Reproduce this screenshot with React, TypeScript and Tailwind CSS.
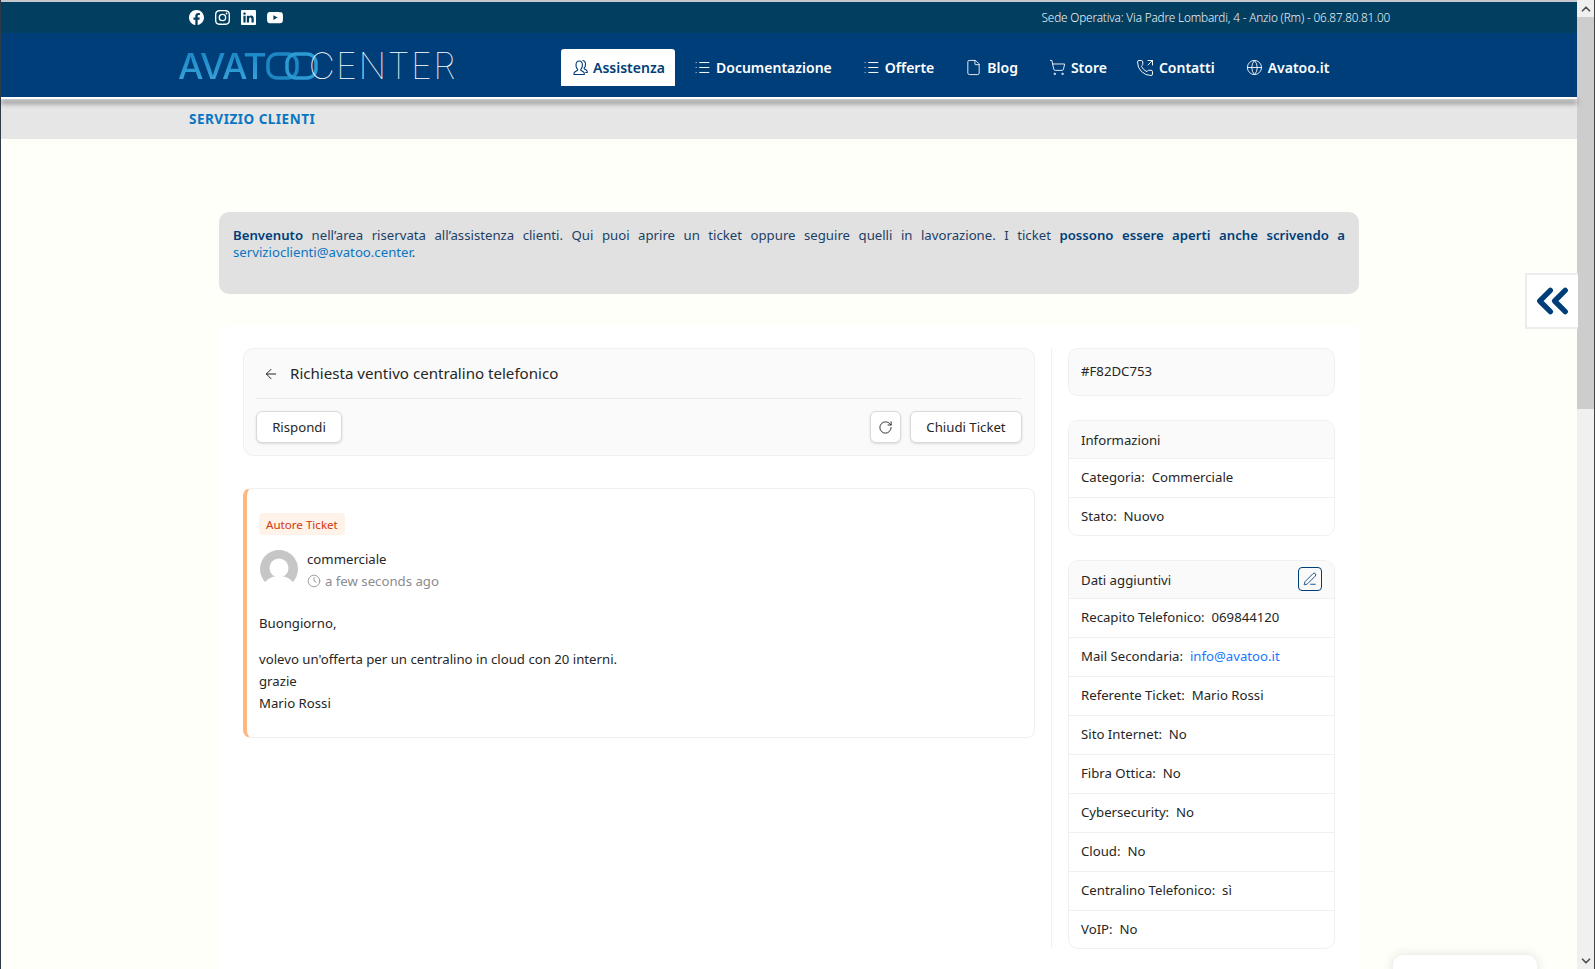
import { BsFacebook, BsInstagram, BsLinkedin, BsYoutube } from "react-icons/bs";
import { ArrowLeft, RotateCw, Clock, List, File, ShoppingCart, PhoneOutgoing, Globe, PenLine, ChevronsLeft, ChevronUp, ChevronDown } from "lucide-react";

function PeopleIcon() {
  return (
    <svg width="17" height="17" viewBox="0 0 17 17" fill="none" stroke="#003e79" strokeWidth="1.1">
      <path d="M2 15.5v-1.2c0-1.6 2.6-2.2 3.6-3v-1C4.6 9.400 4 8 4 6.200 4 3.500 5.200 2 7.200 2s3.200 1.500 3.200 4.200c0 1.800-.6 3.200-1.600 4.100v1c1 .8 3.500 1.400 3.500 3v1.200z" />
      <path d="M10.500 1.500c2 .1 3 1.600 3 3.900 0 1.500-.5 2.700-1.300 3.400v.9c.9.6 3 1.200 3 2.600v1.200h-2" />
    </svg>
  );
}

const navItems = [
  { label: "Documentazione", icon: <List size={17} strokeWidth={1.4} />, cls: "ml-[19px]" },
  { label: "Offerte", icon: <List size={17} strokeWidth={1.4} />, cls: "ml-[31px]" },
  { label: "Blog", icon: <File size={17} strokeWidth={1.25} />, cls: "ml-[31px]" },
  { label: "Store", icon: <ShoppingCart size={17} strokeWidth={1.25} />, cls: "ml-[31px]" },
  { label: "Contatti", icon: <PhoneOutgoing size={18} strokeWidth={1.25} />, cls: "ml-[29px]" },
  { label: "Avatoo.it", icon: <Globe size={17} strokeWidth={1.25} />, cls: "ml-[31px]" },
];

const extras: [string, string][] = [
  ["Referente Ticket:", "Mario Rossi"],
  ["Sito Internet:", "No"],
  ["Fibra Ottica:", "No"],
  ["Cybersecurity:", "No"],
  ["Cloud:", "No"],
  ["Centralino Telefonico:", "sì"],
];

function Row({ k, children, short }: { k: string; children: React.ReactNode; short?: boolean }) {
  return (
    <div className={`${short ? "h-[38px]" : "h-[39px]"} flex items-center pl-3 border-t border-[#f0f0f0] whitespace-pre`}>
      <span>{k}  </span>
      {children}
    </div>
  );
}

function Logo() {
  return (
    <div className="flex items-center h-[32px] leading-none ml-[177px] mt-[1px] w-[277px] shrink-0" style={{ fontFamily: "Inter, sans-serif" }}>
      <span className="text-[36px] font-medium tracking-[-1px] bg-gradient-to-b from-[#1583c6] to-[#3aa6da] bg-clip-text text-transparent">AVAT</span>
      <svg width="52" height="28" viewBox="0 0 52 28" fill="none" strokeWidth="3.5" className="shrink-0">
        <rect x="2" y="2" width="29" height="24" rx="9" stroke="#1d87c4" />
        <rect x="21" y="2" width="29" height="24" rx="9" stroke="#2c9bd3" />
      </svg>
      <span className="text-[36px] font-thin text-white -ml-[9px] tracking-[1.3px]">CENTER</span>
    </div>
  );
}

export default function App() {
  return (
    <div className="relative h-[969px] w-full overflow-hidden flex text-[13.2px] text-[#262626] bg-[#fffffa]" style={{ fontFamily: '"Noto Sans", sans-serif' }}>
      <div className="w-px bg-[#2f3b47] shrink-0" />
      <div className="flex-1 min-w-0 flex flex-col">
        <div className="h-[2px] shrink-0 bg-[#c4c8cc]" />
        <div className="h-[31px] shrink-0 bg-[#023e60] flex items-center justify-between pl-[188px] pr-[187px] text-white">
          <div className="flex items-center gap-[11px] text-[15px]">
            <BsFacebook />
            <BsInstagram />
            <BsLinkedin />
            <BsYoutube className="text-[16px]" />
          </div>
          <span className="text-[11.75px] font-light tracking-[-0.15px] text-[#eef3f7]">Sede Operativa: Via Padre Lombardi, 4 - Anzio (Rm) - 06.87.80.81.00</span>
        </div>
        <div className="h-[64px] shrink-0 bg-[#003e79] flex items-center text-white font-semibold text-[14px]">
          <Logo />
          <div className="ml-[106px] mt-[5px] flex items-center">
            <div className="h-[37px] w-[114px] bg-white rounded-t-[3px] flex items-center pl-[11px] gap-[4px] text-[#003e79]">
              <PeopleIcon />
              <span>Assistenza</span>
            </div>
            {navItems.map((n) => (
              <div key={n.label} className={`flex items-center gap-[5px] ${n.cls}`}>
                {n.icon}
                <span>{n.label}</span>
              </div>
            ))}
          </div>
        </div>
        <div className="relative z-10 h-[2px] shrink-0 bg-white shadow-[0_4px_5px_rgba(0,0,0,0.7)]" />
        <div className="h-[40px] shrink-0 bg-[#e6e6e6] flex items-center pl-[188px] text-[#0a75c2] font-bold text-[13.5px] tracking-[0.5px]">
          SERVIZIO CLIENTI
        </div>

        <div className="w-[1140px] ml-[218px] mt-[73px] flex flex-col shrink-0">
          <div className="h-[82px] rounded-[10px] bg-[#e1e1e1] px-[14px] pt-[15px] text-[#1d3f66] leading-[17px] text-justify">
            <strong className="font-semibold text-[#003e79]">Benvenuto</strong> nell’area riservata all’assistenza clienti. Qui puoi aprire un ticket oppure seguire quelli in lavorazione. I ticket <strong className="font-semibold text-[#003e79]">possono essere aperti anche scrivendo a</strong> <a className="text-[#0a75c2]">servizioclienti@avatoo.center</a>.
          </div>

          <div className="mt-[31px] h-[700px] rounded-[12px] bg-white px-[24px] pt-[23px] flex items-start">
            <div className="w-[792px] shrink-0">
              <div className="h-[108px] rounded-[10px] bg-[#fafafa] border border-[#f0f0f0] px-3 flex flex-col">
                <div className="h-[50px] flex items-center border-b border-[#ececec] shrink-0 pl-[7px] gap-[11px] text-[15.1px] text-[#262626]">
                  <ArrowLeft size={16} strokeWidth={1.5} />
                  <span>Richiesta ventivo centralino telefonico</span>
                </div>
                <div className="flex items-center justify-between mt-3">
                  <button className="h-[32px] w-[86px] pt-[1px] rounded-[6px] bg-white border border-[#d9d9d9] shadow-sm">Rispondi</button>
                  <div className="flex items-center gap-[9px]">
                    <button className="h-[32px] w-[31px] flex items-center justify-center rounded-[6px] bg-white border border-[#d9d9d9] shadow-sm"><RotateCw size={15} strokeWidth={1.5} /></button>
                    <button className="h-[32px] w-[112px] pt-[1px] rounded-[6px] bg-white border border-[#d9d9d9] shadow-sm">Chiudi Ticket</button>
                  </div>
                </div>
              </div>

              <div className="mt-[32px] h-[250px] rounded-[8px] bg-white border border-[#f0f0f0] border-l-[4px] border-l-[#ffb77f] pl-3 pt-6">
                <div className="inline-flex h-[22px] items-center px-[7px] pt-[1px] rounded-[4px] bg-[#fff2e8] text-[#d4380d] text-[11.6px]">Autore Ticket</div>
                <div className="flex mt-[15px] gap-[9px]">
                  <svg width="38" height="38" viewBox="0 0 38 38" className="shrink-0 ml-[1px]">
                    <circle cx="19" cy="19" r="19" fill="#c6c6c6" />
                    <circle cx="19" cy="18" r="9.500" fill="#fff" />
                    <path d="M3 38c1-8 8-12 16-12s15 4 16 12z" fill="#fff" />
                  </svg>
                  <div className="flex flex-col">
                    <span className="leading-[20px] mt-[-1px]">commerciale</span>
                    <span className="flex items-center gap-[4px] text-[#8c8c8c] leading-[22px] mt-[1px]"><Clock size={14} strokeWidth={1.4} />a few seconds ago</span>
                  </div>
                </div>
                <p className="mt-[20px] leading-[22px]">Buongiorno,</p>
                <p className="mt-[14px] leading-[22px]">volevo un'offerta per un centralino in cloud con 20 interni.<br />grazie<br />Mario Rossi</p>
              </div>
            </div>

            <div className="w-px h-[600px] bg-[#f0f0f0] ml-[16px] mr-[16px] shrink-0" />

            <div className="w-[267px] shrink-0 flex flex-col gap-[24px]">
              <div className="h-[48px] rounded-[10px] bg-[#fafafa] border border-[#f0f0f0] flex items-center pl-3">#F82DC753</div>
              <div className="rounded-[10px] border border-[#f0f0f0] overflow-hidden">
                <div className="h-[37px] bg-[#fafafa] flex items-center pl-3 pt-[2px]">Informazioni</div>
                <Row k="Categoria:">Commerciale</Row>
                <Row k="Stato:" short>Nuovo</Row>
              </div>
              <div className="rounded-[10px] border border-[#f0f0f0] overflow-hidden">
                <div className="h-[37px] bg-[#fafafa] flex items-center justify-between pl-3 pr-3">
                  <span className="pt-[2px]">Dati aggiuntivi</span>
                  <span className="w-[24px] h-[24px] -mt-[1px] rounded-[4px] border border-[#003e79] text-[#003e79] flex items-center justify-center"><PenLine size={14} strokeWidth={1.5} /></span>
                </div>
                <Row k="Recapito Telefonico:">069844120</Row>
                <Row k="Mail Secondaria:"><a className="text-[#1677ff]">info@avatoo.it</a></Row>
                {extras.map(([k, v]) => <Row key={k} k={k}>{v}</Row>)}
                <Row k="VoIP:" short>No</Row>
              </div>
            </div>
          </div>
        </div>
      </div>

      <div className="w-[17px] shrink-0 bg-[#f0f0f0] flex flex-col">
        <div className="h-[17px] flex items-center justify-center text-[#505050]"><ChevronUp size={14} strokeWidth={3} /></div>
        <div className="h-[392px] bg-[#cdcdcd]" />
        <div className="flex-1" />
        <div className="h-[17px] flex items-center justify-center text-[#505050]"><ChevronDown size={14} strokeWidth={3} /></div>
      </div>
      <div className="w-px bg-[#444] shrink-0" />

      <div className="absolute left-[1525px] top-[273px] w-[53px] h-[56px] bg-white border-2 border-r-0 border-[#ececec] flex items-center justify-center text-[#003e79]">
        <ChevronsLeft size={52} strokeWidth={2.5} />
      </div>
      <div className="absolute left-[1393px] top-[955px] w-[144px] h-[30px] rounded-t-[10px] bg-white shadow-[0_0_12px_rgba(0,0,0,0.12)]" />
    </div>
  );
}
